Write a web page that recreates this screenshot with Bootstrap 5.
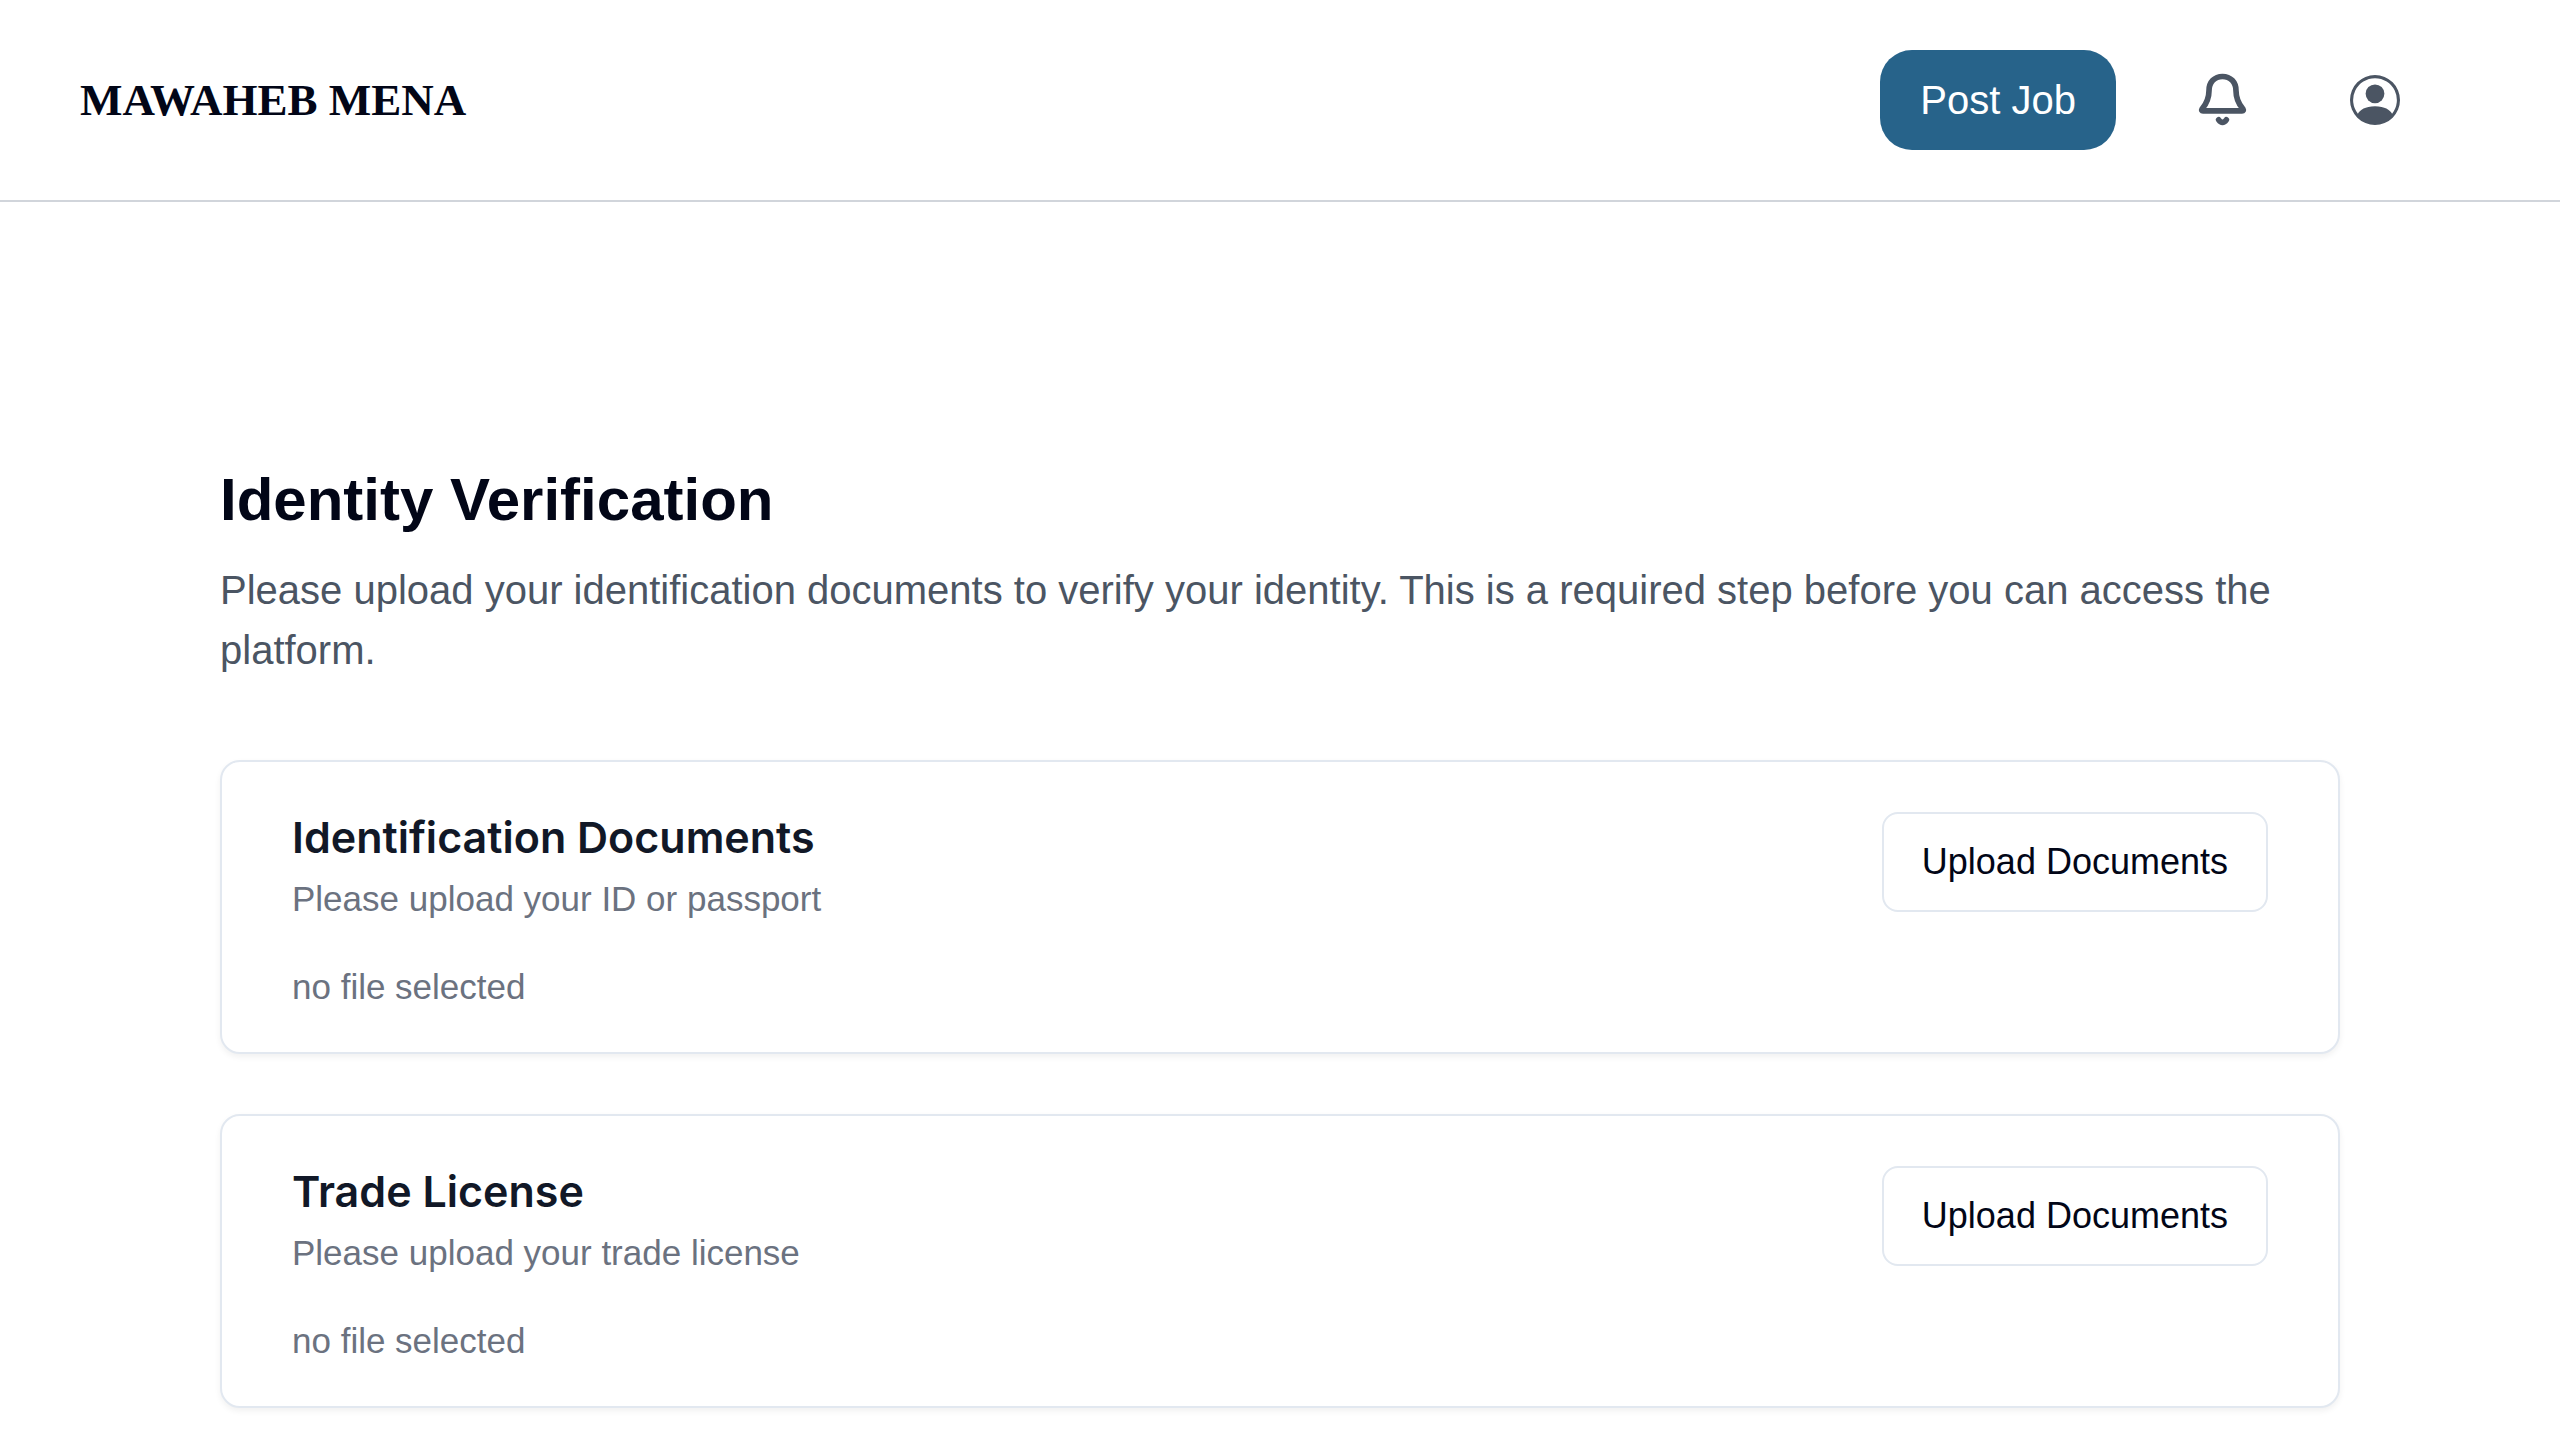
<!DOCTYPE html>
<html lang="en">
<head>
<meta charset="utf-8">
<meta name="viewport" content="width=device-width, initial-scale=1">
<title>Mawaheb Mena – Identity Verification</title>
<link href="https://cdn.jsdelivr.net/npm/bootstrap@5.3.0/dist/css/bootstrap.min.css" rel="stylesheet">
<style>
body { font-family: "Liberation Sans", Arial, sans-serif; color: #020617; background: #fff; }
.site-header { min-height: 202px; padding: 0 140px 0 80px; border-bottom: 2px solid #d1d5db; }
.site-brand { font: 700 45px/60px "Liberation Serif", serif; color: #020617; }
.header-actions { gap: 62px; }
.btn-post { --bs-btn-color: #fff; --bs-btn-bg: #27638a; --bs-btn-hover-color: #fff; --bs-btn-hover-bg: #1f5274;
  border: 0; border-radius: 32px; padding: 20px 40px; font-size: 40px; line-height: 60px; }
.btn-glyph { width: 90px; height: 90px; color: #4b5563; border: 0; }
.verify-main { max-width: 2120px; padding: 262px 0 60px; }
.verify-title { font-size: 60px; line-height: 72px; font-weight: 700; margin-bottom: 24px; }
.verify-intro { font-size: 40px; line-height: 60px; color: #4b5563; margin-bottom: 80px; }
.doc-list { gap: 60px; }
.doc-card { border: 2px solid #e2e8f0; border-radius: 20px; box-shadow: 0 3px 6px rgba(0, 0, 0, .06); }
.doc-body { padding: 50px 70px 40px; }
.doc-title { font: 600 43px/50px Inter, sans-serif; color: #111827; margin-bottom: 12px; }
.doc-text { font-size: 35px; line-height: 50px; color: #6b7280; }
.doc-hint { margin-bottom: 38px; }
.btn-upload { --bs-btn-color: #020617; --bs-btn-bg: #fff; --bs-btn-border-color: #e2e8f0; --bs-btn-hover-bg: #f1f5f9;
  --bs-btn-hover-border-color: #e2e8f0; border-width: 2px; border-radius: 16px; padding: 23px 38px; font-size: 36px; line-height: 50px; }
</style>
</head>
<body>
<header class="site-header navbar justify-content-between">
  <a class="site-brand text-decoration-none" href="#">MAWAHEB MENA</a>
  <div class="header-actions d-flex align-items-center">
    <button type="button" class="btn btn-post">Post Job</button>
    <button type="button" class="btn btn-glyph p-0 d-flex align-items-center justify-content-center" aria-label="Notifications">
      <svg width="90" height="90" viewBox="-9 -15 270 270" fill="none" stroke="currentColor" stroke-width="17" stroke-linecap="round" stroke-linejoin="round" aria-hidden="true">
        <path d="M63 147C75 133 84 118 84 92C84 66 101 49.500 124.500 49.500C148 49.500 165 66 165 92C165 118 174 133 186 147Q189 152.500 183 152.500H66Q60 152.500 63 147Z"/>
        <path d="M113 179.500Q124.500 195 136 179.500"/>
      </svg>
    </button>
    <button type="button" class="btn btn-glyph p-0 d-flex align-items-center justify-content-center" aria-label="Account">
      <svg width="50" height="50" viewBox="0 0 16 16" fill="currentColor" aria-hidden="true">
        <path d="M11 6a3 3 0 1 1-6 0 3 3 0 0 1 6 0z"/>
        <path fill-rule="evenodd" d="M0 8a8 8 0 1 1 16 0A8 8 0 0 1 0 8zm8-7a7 7 0 0 0-5.468 11.370C3.242 11.226 4.805 10 8 10s4.757 1.225 5.468 2.370A7 7 0 0 0 8 1z"/>
      </svg>
    </button>
  </div>
</header>
<main class="verify-main mx-auto">
  <h1 class="verify-title">Identity Verification</h1>
  <p class="verify-intro">Please upload your identification documents to verify your identity. This is a required step before you can access the platform.</p>
  <div class="doc-list d-flex flex-column">
    <section class="card doc-card">
      <div class="card-body doc-body d-flex justify-content-between align-items-start">
        <div>
          <h2 class="doc-title">Identification Documents</h2>
          <p class="doc-text doc-hint">Please upload your ID or passport</p>
          <p class="doc-text mb-0">no file selected</p>
        </div>
        <button type="button" class="btn btn-upload">Upload Documents</button>
      </div>
    </section>
    <section class="card doc-card">
      <div class="card-body doc-body d-flex justify-content-between align-items-start">
        <div>
          <h2 class="doc-title">Trade License</h2>
          <p class="doc-text doc-hint">Please upload your trade license</p>
          <p class="doc-text mb-0">no file selected</p>
        </div>
        <button type="button" class="btn btn-upload">Upload Documents</button>
      </div>
    </section>
  </div>
</main>
<script src="https://cdn.jsdelivr.net/npm/bootstrap@5.3.0/dist/js/bootstrap.bundle.min.js"></script>
</body>
</html>
